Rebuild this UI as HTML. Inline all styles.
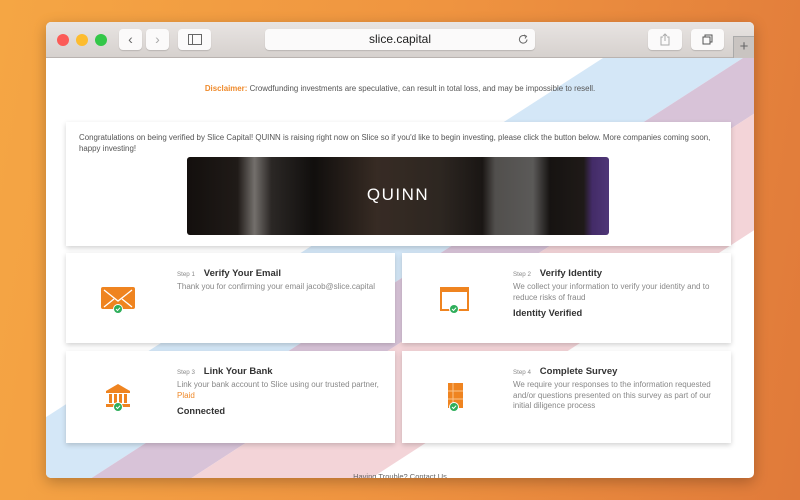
<!DOCTYPE html>
<html><head><meta charset="utf-8"><style>
*{margin:0;padding:0;box-sizing:border-box}
body{width:800px;height:500px;overflow:hidden;background:linear-gradient(100deg,#f5a644 0%,#ef9440 50%,#e07a3a 100%);font-family:"Liberation Sans",sans-serif;position:relative}
.win{position:absolute;left:46px;top:22px;width:708px;height:456px;border-radius:5px;overflow:hidden;background:#fff;box-shadow:0 4px 14px rgba(0,0,0,.25)}
.bar{position:absolute;left:0;top:0;width:708px;height:36px;background:linear-gradient(#e8e4e2,#d6d1ce);border-bottom:1px solid #b9b3b0}
.dot{position:absolute;top:12px;width:12px;height:12px;border-radius:50%}
.btn{position:absolute;top:7px;height:21px;background:#fbfafa;border-radius:4px;box-shadow:0 1px 1px rgba(0,0,0,.15);color:#666;text-align:center;font-size:14px;line-height:20px}
.url{position:absolute;left:219px;top:7px;width:270px;height:21px;background:#fbfafa;border-radius:4px;box-shadow:0 1px 1px rgba(0,0,0,.15);font-size:12px;color:#222;text-align:center;line-height:21px}
.page{position:absolute;left:0;top:36px;width:708px;height:420px;overflow:hidden}
.card{position:absolute;background:#fff;box-shadow:0 2px 5px rgba(0,0,0,.18)}
.small{font-size:7.9px;color:#555;line-height:11px}
.lbl{font-size:6.2px;color:#888}
.ttl{font-size:9.5px;color:#333;font-weight:bold}
.desc{position:absolute;left:111px;top:29px;width:215px;font-size:8px;color:#888;line-height:10.5px}
.stat{position:absolute;left:111px;font-size:9.3px;font-weight:bold;color:#333}
.hd{position:absolute;left:111px;top:10px;white-space:nowrap}
.ic{position:absolute;left:34px;top:28px}
</style></head><body>
<div class="win">
 <div class="bar">
  <div class="dot" style="left:11px;background:#fc5b57"></div>
  <div class="dot" style="left:30px;background:#fdbc2e"></div>
  <div class="dot" style="left:49px;background:#33c748"></div>
  <div class="btn" style="left:73px;width:23px">&#8249;</div>
  <div class="btn" style="left:100px;width:23px;color:#aaa">&#8250;</div>
  <div class="btn" style="left:132px;width:33px"><svg width="14" height="11" style="margin-top:5px" viewBox="0 0 14 11"><rect x=".5" y=".5" width="13" height="10" fill="none" stroke="#666"/><line x1="4.5" y1="0" x2="4.5" y2="11" stroke="#666"/></svg></div>
  <div class="url">slice.capital<svg width="11" height="11" viewBox="0 0 11 11" style="position:absolute;right:6px;top:5px"><path d="M9 5.5A3.8 3.8 0 1 1 7.5 2.3" fill="none" stroke="#666" stroke-width="1"/><path d="M6 1l2.5 1.3L7 4.5" fill="none" stroke="#666"/></svg></div>
  <div class="btn" style="left:602px;width:34px"><svg width="10" height="13" viewBox="0 0 10 13" style="margin-top:4px"><path d="M3 4H1v8h8V4H7M5 1v7M3 3l2-2 2 2" fill="none" stroke="#aaa"/></svg></div>
  <div class="btn" style="left:645px;width:33px"><svg width="11" height="11" viewBox="0 0 11 11" style="margin-top:5px"><rect x="1" y="3" width="7" height="7" fill="none" stroke="#555"/><path d="M3 3V1h7v7H8" fill="none" stroke="#555"/></svg></div>
  <div style="position:absolute;left:687px;top:14px;width:21px;height:22px;background:#c9c4c1;border-left:1px solid #aaa;border-top:1px solid #aaa;color:#666;font-size:15px;text-align:center;line-height:20px">+</div>
 </div>
 <div class="page">
  <svg width="708" height="420" style="position:absolute;left:0;top:0">
   <g transform="translate(-46,-58)">
    <polygon points="603,58 743,58 90,479 -50,479" fill="#d4e7f7"/>
    <polygon points="743,58 840,58 190,479 90,479" fill="#d8c3d8"/>
    <polygon points="840,58 1020,58 370,479 190,479" fill="#f3d4d8"/>
   </g>
  </svg>
  <div style="position:absolute;left:0;top:26px;width:708px;text-align:center;font-size:7.9px;color:#555"><b style="color:#ef8a2b">Disclaimer:</b> Crowdfunding investments are speculative, can result in total loss, and may be impossible to resell.</div>
  <div class="card" style="left:20px;top:64px;width:665px;height:124px">
   <div class="small" style="position:absolute;left:13px;top:10px;width:645px">Congratulations on being verified by Slice Capital! QUINN is raising right now on Slice so if you'd like to begin investing, please click the button below. More companies coming soon, happy investing!</div>
   <div style="position:absolute;left:121px;top:35px;width:422px;height:78px;border-radius:3px;overflow:hidden;background:linear-gradient(90deg,#1a1512 0%,#2b2420 12%,#9a9590 16%,#3a3532 20%,#171412 30%,#4a3a30 45%,#3d342d 60%,#231e1b 70%,#6d6a67 73%,#7a7876 82%,#1e1a18 86%,#2a2320 94%,#5a3a8a 96%,#6a4aa0 100%)">
    <div style="position:absolute;inset:0;background:rgba(0,0,0,.25)"></div>
    <div style="position:absolute;left:0;width:422px;top:28px;text-align:center;color:#fff;font-size:17px;letter-spacing:1.5px">QUINN</div>
   </div>
  </div>
  <div class="card" style="left:20px;top:195px;width:329px;height:90px">
   <svg class="ic" width="36" height="34" viewBox="0 0 36 34"><rect x="1" y="6" width="34" height="22" rx="2" fill="#ef8420"/><path d="M4 9l14 11 14-11M4 26l10-8M32 26l-10-8" fill="none" stroke="#fff" stroke-width="1.3"/><circle cx="18" cy="28" r="5" fill="#fff"/><circle cx="18" cy="28" r="4" fill="#2fae5b"/><path d="M16 28l1.5 1.5 2.6-2.8" fill="none" stroke="#fff" stroke-width="1"/></svg>
   <div class="hd"><span class="lbl">Step 1</span>&nbsp; <span class="ttl">Verify Your Email</span></div>
   <div class="desc">Thank you for confirming your email jacob@slice.capital</div>
  </div>
  <div class="card" style="left:356px;top:195px;width:329px;height:90px">
   <svg class="ic" width="36" height="34" viewBox="0 0 36 34"><rect x="5" y="7" width="27" height="22" fill="#fff" stroke="#ef8420" stroke-width="2"/><rect x="5" y="7" width="27" height="4" fill="#ef8420"/><circle cx="18" cy="28" r="5" fill="#fff"/><circle cx="18" cy="28" r="4" fill="#2fae5b"/><path d="M16 28l1.5 1.5 2.6-2.8" fill="none" stroke="#fff" stroke-width="1"/></svg>
   <div class="hd"><span class="lbl">Step 2</span>&nbsp; <span class="ttl">Verify Identity</span></div>
   <div class="desc">We collect your information to verify your identity and to reduce risks of fraud</div>
   <div class="stat" style="top:55px">Identity Verified</div>
  </div>
  <div class="card" style="left:20px;top:293px;width:329px;height:92px">
   <svg class="ic" width="36" height="34" viewBox="0 0 36 34"><path d="M6 12L18 5l12 7z" fill="#ef8420"/><rect x="6" y="12" width="24" height="2" fill="#ef8420"/><rect x="9" y="15" width="3" height="9" fill="#ef8420"/><rect x="14" y="15" width="3" height="9" fill="#ef8420"/><rect x="19" y="15" width="3" height="9" fill="#ef8420"/><rect x="24" y="15" width="3" height="9" fill="#ef8420"/><rect x="6" y="25" width="24" height="3" fill="#ef8420"/><circle cx="18" cy="28" r="5" fill="#fff"/><circle cx="18" cy="28" r="4" fill="#2fae5b"/><path d="M16 28l1.5 1.5 2.6-2.8" fill="none" stroke="#fff" stroke-width="1"/></svg>
   <div class="hd"><span class="lbl">Step 3</span>&nbsp; <span class="ttl">Link Your Bank</span></div>
   <div class="desc">Link your bank account to Slice using our trusted partner, <span style="color:#ef8a2b">Plaid</span></div>
   <div class="stat" style="top:55px">Connected</div>
  </div>
  <div class="card" style="left:356px;top:293px;width:329px;height:92px">
   <svg class="ic" width="36" height="34" viewBox="0 0 36 34"><rect x="12" y="4" width="15" height="25" fill="#ef8420"/><path d="M12 12h15M12 20h15M17 4v25" stroke="#fbc48a" stroke-width="1"/><circle cx="18" cy="28" r="5" fill="#fff"/><circle cx="18" cy="28" r="4" fill="#2fae5b"/><path d="M16 28l1.5 1.5 2.6-2.8" fill="none" stroke="#fff" stroke-width="1"/></svg>
   <div class="hd"><span class="lbl">Step 4</span>&nbsp; <span class="ttl">Complete Survey</span></div>
   <div class="desc">We require your responses to the information requested and/or questions presented on this survey as part of our initial diligence process</div>
  </div>
  <div style="position:absolute;left:0;top:414px;width:708px;text-align:center;font-size:7.5px;color:#666">Having Trouble? Contact Us</div>
 </div>
</div>
</body></html>
